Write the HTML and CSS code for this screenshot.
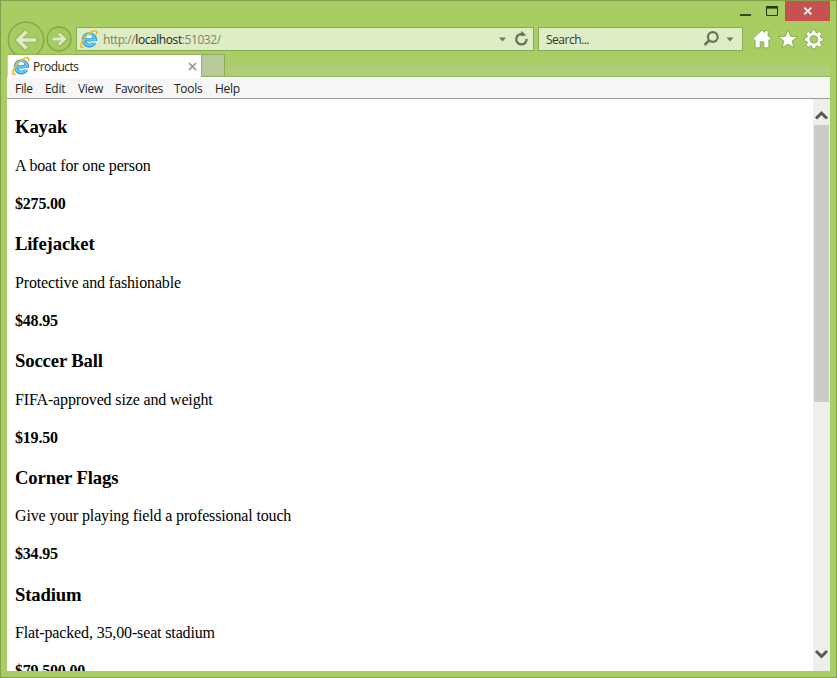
FILE: index.html
```html
<!DOCTYPE html>
<html lang="en">
<head>
<meta charset="utf-8">
<title>Products</title>
<link rel="stylesheet" href="styles.css">
</head>
<body>
<svg class="defs" width="0" height="0">
  <symbol id="ie" viewBox="0 0 20 20">
    <path d="M15.400 13.600A5.700 5.700 0 1 1 16.100 10.700H6" fill="none" stroke="#2c8fc9" stroke-width="3.800"/>
    <path d="M15.200 13.600A5.700 5.700 0 1 1 16 10.700H6" fill="none" stroke="#62c8f3" stroke-width="2.300"/>
    <path d="M7.400 8.900h5.800a2.900 2.900 0 0 0-5.800 0z" fill="#fff"/>
    <path d="M12.600 12.800h5.800" stroke="#fff" stroke-width="1.100"/>
    <path d="M4.500 18C1.200 19.600.9 16.500 3.400 11.800 6.500 5.800 13.200 1.100 16.600 1.800c1.500.4 1.500 2 .9 3.600" fill="none" stroke="#f3b91d" stroke-width="1.600"/>
  </symbol>
</svg>
<div class="window">
  <header class="titlebar">
    <svg width="50" height="20" viewBox="0 0 50 20"><path d="M5 14h11" stroke="#222" stroke-width="1.6"/><path d="M31.500 5.500h11v9h-11z" fill="none" stroke="#2b3515"/><path d="M31 6.500h12" stroke="#2b3515" stroke-width="2.200"/></svg>
    <div class="close"><svg width="10" height="8" viewBox="0 0 10 8"><path d="M1.300.7l7 6.600M8.300.7l-7 6.600" stroke="#fff" stroke-width="1.8"/></svg></div>
  </header>
  <nav class="navbar">
    <svg class="back" width="38" height="38" viewBox="0 0 38 38"><circle cx="19" cy="19" r="17.800" fill="#a5cb62" stroke="#82a547" stroke-width="1.300"/><path d="M29.500 19H11M19.500 10L10.500 19l9 9" fill="none" stroke="#8fb153" stroke-width="5"/><path d="M29 19H11.500M19.500 10.500L11 19l8.500 8.500" fill="none" stroke="#dfeac8" stroke-width="3.600"/></svg>
    <svg class="forward" width="26" height="26" viewBox="0 0 26 26"><circle cx="13" cy="13" r="12" fill="#a5cb62" stroke="#82a547" stroke-width="1.300"/><path d="M6 13h12M13 7l6 6-6 6" fill="none" stroke="#8fb153" stroke-width="4.200"/><path d="M6.500 13h11.500M13 7.500l5.500 5.500-5.500 5.500" fill="none" stroke="#dfeac8" stroke-width="2.900"/></svg>
    <div class="field address">
      <svg width="20" height="20"><use href="#ie"/></svg>
      <span class="url">http://<b>localhost</b>:51032/</span>
      <svg class="end" width="36" height="20" viewBox="0 0 36 20"><path d="M3 8.500h7l-3.500 4z" fill="#6c7760"/><path d="M27 5.300a5.200 5.200 0 1 0 3.600 4.500" fill="none" stroke="#68735b" stroke-width="2.300"/><path d="M25.200 1.700v5.600l5-1z" fill="#68735b"/></svg>
    </div>
    <div class="field search">
      <span>Search...</span>
      <svg class="end" width="36" height="20" viewBox="0 0 36 20"><circle cx="13.800" cy="8" r="4.900" fill="none" stroke="#68735b" stroke-width="2.200"/><path d="M10.200 11.500L5.500 16" stroke="#68735b" stroke-width="2.500"/><path d="M27.500 8.500h7L31 12.500z" fill="#6c7760"/></svg>
    </div>
    <svg class="tools" width="74" height="22" viewBox="0 0 74 22">
      <g fill="#fff" stroke="#7f9e4b" stroke-width=".8">
        <path d="M.6 11L10 1.800l2.700 2.700V2.600h3.400v5.200l3.300 3.200-1.500 1.500-1-.9v8.200h-5.100v-6H8.200v6H3.100v-8.200l-1 .9z"/>
        <path d="M36 1.800l2.600 6.400 6.800.5-5.300 4.300 1.800 6.800-5.900-3.700-5.900 3.700 1.800-6.800-5.300-4.300 6.800-.5z"/>
        <path fill-rule="evenodd" d="M60.100 2h3.400l.4 2.500 1.300.5 2.100-1.500 2.400 2.400-1.500 2.100.5 1.300 2.500.4v3.400l-2.500.4-.5 1.300 1.500 2.100-2.400 2.400-2.100-1.500-1.300.5-.4 2.500h-3.400l-.4-2.500-1.300-.5-2.100 1.500-2.400-2.400 1.500-2.100-.5-1.300-2.500-.4V9.700l2.500-.4.500-1.300-1.500-2.100 2.400-2.400L58.400 5l1.300-.5zM61.800 7.600a3.800 3.800 0 1 0 0 7.600 3.800 3.800 0 1 0 0-7.600z"/>
      </g>
    </svg>
  </nav>
  <div class="tabs">
    <div class="tab">
      <svg width="20" height="20"><use href="#ie"/></svg>
      <span class="tab-title">Products</span>
      <svg class="tab-close" width="9" height="9" viewBox="0 0 9 9"><path d="M1 1l7 7M8 1L1 8" stroke="#929292" stroke-width="1.700"/></svg>
    </div>
    <div class="new-tab"></div>
    <div class="tab-space"></div>
  </div>
  <div class="menu"><span class="m-file">File</span><span class="m-edit">Edit</span><span class="m-view">View</span><span class="m-fav">Favorites</span><span class="m-tools">Tools</span><span>Help</span></div>
  <div class="viewport">
    <main>
      <section><h3>Kayak</h3><p>A boat for one person</p><h4>$275.00</h4></section>
      <section><h3>Lifejacket</h3><p>Protective and fashionable</p><h4>$48.95</h4></section>
      <section><h3>Soccer Ball</h3><p>FIFA-approved size and weight</p><h4>$19.50</h4></section>
      <section><h3>Corner Flags</h3><p>Give your playing field a professional touch</p><h4>$34.95</h4></section>
      <section><h3>Stadium</h3><p>Flat-packed, 35,00-seat stadium</p><h4>$79,500.00</h4></section>
    </main>
    <div class="scrollbar">
      <svg width="17" height="26" viewBox="0 0 17 26"><path d="M3 19.500L8.500 14l5.500 5.500" fill="none" stroke="#585858" stroke-width="3"/></svg>
      <div class="thumb"></div>
      <svg class="down" width="17" height="27" viewBox="0 0 17 27"><path d="M3 7L8.500 12.500 14 7" fill="none" stroke="#585858" stroke-width="3"/></svg>
    </div>
  </div>
</div>
</body>
</html>
```
FILE: styles.css
```css
* { box-sizing: border-box; }
body { margin: 0; overflow: hidden; font-family: "Open Sans", "Noto Sans", sans-serif; font-size: 12px; color: #222; }
svg { display: block; flex: none; }
.defs { position: absolute; }
.window { display: flex; flex-direction: column; width: 837px; height: 678px; padding: 0 6px 6px; background: #a8ce63; border: 1px solid #809f49; }
.titlebar { display: flex; flex: none; justify-content: flex-end; height: 20px; }
.close { display: flex; align-items: center; justify-content: center; width: 45px; height: 20px; background: #c75050; }
.navbar { display: flex; flex: none; align-items: center; height: 33px; padding-top: 3px; }
.back { margin-bottom: -2px; }
.forward { margin-left: 1px; }
.field { display: flex; align-items: center; height: 24px; border: 1px solid #88a955; background: #deedc3; white-space: nowrap; }
.address { width: 458px; margin-left: 4px; padding-left: 2px; }
.search { width: 205px; margin-left: 4px; padding-left: 7px; color: #333; letter-spacing: -.5px; }
.search span { padding-top: 1px; }
.end { margin-left: auto; }
.address .end { margin-right: 1px; }
.search .end { margin-right: 7px; }
.url { margin-left: 4px; padding-top: 1px; color: #7c8571; letter-spacing: -.42px; }
.url b { font-weight: 400; color: #222; }
.tools { margin-left: 9px; }
.tabs { display: flex; flex: none; height: 23px; }
.tab { display: flex; align-items: center; width: 195px; height: 23px; padding: 0 4px 0 3px; background: #fff; border: 1px solid #94b35a; border-bottom: 0; border-left-color: #c3d9a0; }
.tab-title { margin-left: 2px; letter-spacing: -.55px; }
.tab-close { margin-left: auto; }
.new-tab { width: 23px; height: 23px; background: #b7ca9b; border: 1px solid #8fac5c; border-left: 0; }
.tab-space { flex: 1; height: 23px; border-bottom: 1px solid #93b656; background: linear-gradient(#a8ce63 25%, #adcc72 55%, #afd07b); }
.menu { display: flex; flex: none; align-items: center; height: 22px; padding-left: 8px; border-top: 1px solid #fff; border-bottom: 1px solid #999; background: #f6f6f6; letter-spacing: -.3px; }
.menu span { width: 40px; }
.menu .m-file { width: 30px; }
.menu .m-edit { width: 33px; }
.menu .m-view { width: 37px; }
.menu .m-fav { width: 59px; }
.menu .m-tools { width: 41px; }
.viewport { display: flex; flex: 1; min-height: 0; overflow: hidden; background: #fff; }
main { flex: 1; padding: 0 8px; font-family: "Liberation Serif", serif; font-size: 16px; color: #000; }
h3, p, h4 { margin: 0; white-space: nowrap; }
section { height: 116.9px; padding-top: 17.400px; }
h3 { height: 22px; font-size: 18.720px; line-height: 22px; letter-spacing: -.15px; }
p { height: 20px; margin-top: 17.400px; line-height: 20px; letter-spacing: -.145px; }
h4 { height: 20px; margin-top: 18px; font-size: 16px; line-height: 20px; letter-spacing: -.2px; }
.scrollbar { display: flex; flex-direction: column; width: 17px; background: #eee; }
.thumb { height: 277px; margin: 0 1px; background: #cbcbcb; }
.down { margin-top: auto; }
```
